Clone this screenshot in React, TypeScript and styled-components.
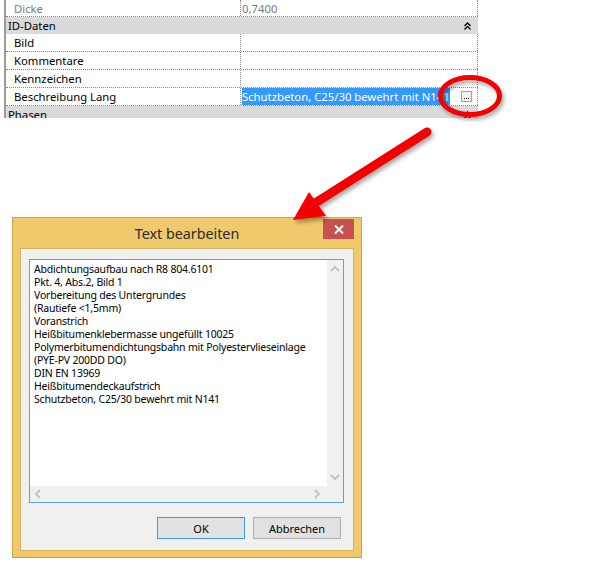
import React from 'react';
import styled, { createGlobalStyle } from 'styled-components';

const GlobalStyle = createGlobalStyle`
  html, body {
    margin: 0;
    padding: 0;
    background: #ffffff;
  }
  body {
    font-family: "Noto Sans", "Liberation Sans", sans-serif;
    font-size: 11.3px;
    color: #000000;
  }
`;

const Page = styled.div`
  position: relative;
  width: 604px;
  height: 566px;
  overflow: hidden;
  background: #ffffff;
`;

/* ---------- property grid ---------- */

const Grid = styled.div`
  margin-left: 4px;
  width: 472px;
  height: 118px;
  overflow: hidden;
  border-left: 2px solid #9a9a9a;
  display: flex;
  flex-direction: column;
`;

const Row = styled.div<{ $h?: number }>`
  display: grid;
  grid-template-columns: 235px 1fr;
  height: ${p => p.$h ?? 18}px;
  box-sizing: border-box;
  border-bottom: 1px dotted #8a8a8a;
  flex: none;
`;

const Label = styled.div<{ $muted?: boolean }>`
  padding-left: 8px;
  display: flex;
  align-items: center;
  border-right: 1px dotted #8a8a8a;
  color: ${p => (p.$muted ? '#7a7a7a' : '#000000')};
  white-space: nowrap;
`;

const Value = styled.div<{ $muted?: boolean }>`
  display: flex;
  align-items: center;
  padding-left: 1px;
  border-right: 1px dotted #8a8a8a;
  color: ${p => (p.$muted ? '#7a7a7a' : '#000000')};
  white-space: nowrap;
  overflow: hidden;
`;

const Selected = styled.span`
  background: #3399ff;
  color: #ffffff;
  width: 208px;
  height: 17px;
  line-height: 17px;
  overflow: hidden;
  white-space: nowrap;
  flex: none;
`;

const EllipsisButton = styled.span`
  margin-left: 11px;
  width: 11px;
  height: 11px;
  box-sizing: border-box;
  border: 1px solid #a0a0a0;
  background: #f2f2f2;
  display: flex;
  align-items: flex-end;
  justify-content: center;
  gap: 1px;
  padding-bottom: 2px;
  flex: none;
`;

const Dot = styled.span`
  width: 1px;
  height: 1px;
  background: #222222;
`;

const Category = styled.div`
  height: 17px;
  flex: none;
  background: #dadada;
  display: flex;
  align-items: center;
  justify-content: space-between;
  padding: 0 7px 0 2px;
  white-space: nowrap;
`;

const Chevron = () => (
  <svg width="7" height="8" viewBox="0 0 7 8">
    <path d="M0.5 4 L3.5 1 L6.5 4 M0.5 7.5 L3.5 4.5 L6.5 7.5" fill="none" stroke="#000" strokeWidth="1.3" />
  </svg>
);

/* ---------- dialog ---------- */

const Dialog = styled.div`
  margin: 99px 0 0 12px;
  width: 350px;
  height: 341px;
  box-sizing: border-box;
  border: 1px solid #c8a44e;
  background: #efc96c;
  display: flex;
  flex-direction: column;
  padding: 0 7px 6px 7px;
`;

const TitleBar = styled.div`
  height: 30px;
  flex: none;
  display: grid;
  grid-template-columns: 1fr auto 1fr;
  align-items: start;
`;

const Title = styled.div`
  grid-column: 2;
  padding-top: 6px;
  font-size: 14.3px;
  color: #2b2b2b;
`;

const CloseButton = styled.div`
  grid-column: 3;
  justify-self: end;
  margin-top: 1px;
  width: 31px;
  height: 20px;
  background: #c75050;
  display: flex;
  align-items: center;
  justify-content: center;
`;

const Client = styled.div`
  flex: 1;
  box-sizing: border-box;
  border: 1px solid #d6b25c;
  background: #f0f0f0;
  padding: 10px 9px 10px 8px;
  display: flex;
  flex-direction: column;
`;

const TextBox = styled.div`
  height: 244px;
  box-sizing: border-box;
  border: 1px solid #5a9ee6;
  display: grid;
  grid-template-columns: 1fr 16px;
  grid-template-rows: 1fr 16px;
  background: #f0f0f0;
`;

const TextArea = styled.div`
  background: #ffffff;
  padding: 3px 4px;
  font-size: 10.5px;
  letter-spacing: -0.2px;
  line-height: 13px;
  color: #000000;
  white-space: pre;
  overflow: hidden;
`;

const ScrollCell = styled.div`
  display: flex;
  flex-direction: column;
  align-items: center;
  justify-content: space-between;
  padding: 5px 0;
`;

const HScroll = styled.div`
  display: flex;
  align-items: center;
  justify-content: space-between;
  padding: 0 6px 0 4px;
`;

const ButtonRow = styled.div`
  margin-top: 14px;
  display: flex;
  justify-content: flex-end;
  gap: 8px;
  padding-right: 3px;
`;

const DialogButton = styled.div<{ $default?: boolean }>`
  width: 88px;
  height: 22px;
  box-sizing: border-box;
  border: 1px solid ${p => (p.$default ? '#3d98e8' : '#adadad')};
  background: #e1e1e1;
  display: flex;
  align-items: center;
  justify-content: center;
  font-size: 11px;
`;

const Overlay = styled.svg`
  position: absolute;
  left: 0;
  top: 0;
  pointer-events: none;
`;

const Arrow = ({ dir }: { dir: 'up' | 'down' | 'left' | 'right' }) => {
  const d = {
    up: 'M1 6 L5 2 L9 6',
    down: 'M1 2 L5 6 L9 2',
    left: 'M6 1 L2 5 L6 9',
    right: 'M2 1 L6 5 L2 9',
  }[dir];
  const vertical = dir === 'up' || dir === 'down';
  return (
    <svg width={vertical ? 10 : 8} height={vertical ? 8 : 10} viewBox={vertical ? '0 0 10 8' : '0 0 8 10'}>
      <path d={d} fill="none" stroke="#c4c4c4" strokeWidth="2" />
    </svg>
  );
};

const lines = [
  'Abdichtungsaufbau nach R8 804.6101',
  'Pkt. 4, Abs.2, Bild 1',
  'Vorbereitung des Untergrundes',
  '(Rautiefe <1,5mm)',
  'Voranstrich',
  'Heißbitumenklebermasse ungefüllt 10025',
  'Polymerbitumendichtungsbahn mit Polyestervlieseinlage',
  '(PYE-PV 200DD DO)',
  'DIN EN 13969',
  'Heißbitumendeckaufstrich',
  'Schutzbeton, C25/30 bewehrt mit N141',
];

export default function App() {
  return (
    <>
      <GlobalStyle />
      <Page>
        <Grid>
          <Row $h={17}>
            <Label $muted>Dicke</Label>
            <Value $muted>0,7400</Value>
          </Row>
          <Category>
            <span>ID-Daten</span>
            <Chevron />
          </Category>
          <Row>
            <Label>Bild</Label>
            <Value />
          </Row>
          <Row>
            <Label>Kommentare</Label>
            <Value />
          </Row>
          <Row>
            <Label>Kennzeichen</Label>
            <Value />
          </Row>
          <Row>
            <Label>Beschreibung Lang</Label>
            <Value>
              <Selected>Schutzbeton, C25/30 bewehrt mit N141</Selected>
              <EllipsisButton>
                <Dot />
                <Dot />
                <Dot />
              </EllipsisButton>
            </Value>
          </Row>
          <Category>
            <span>Phasen</span>
            <Chevron />
          </Category>
        </Grid>

        <Dialog>
          <TitleBar>
            <Title>Text bearbeiten</Title>
            <CloseButton>
              <svg width="10" height="9" viewBox="0 0 10 9">
                <path d="M1 0.5 L9 8.5 M9 0.5 L1 8.5" stroke="#ffffff" strokeWidth="2" />
              </svg>
            </CloseButton>
          </TitleBar>
          <Client>
            <TextBox>
              <TextArea>{lines.join('\n')}</TextArea>
              <ScrollCell>
                <Arrow dir="up" />
                <Arrow dir="down" />
              </ScrollCell>
              <HScroll>
                <Arrow dir="left" />
                <Arrow dir="right" />
              </HScroll>
              <div />
            </TextBox>
            <ButtonRow>
              <DialogButton $default>OK</DialogButton>
              <DialogButton>Abbrechen</DialogButton>
            </ButtonRow>
          </Client>
        </Dialog>

        <Overlay width="604" height="566" viewBox="0 0 604 566">
          <defs>
            <filter id="shadow" x="-20%" y="-20%" width="140%" height="140%">
              <feDropShadow dx="2" dy="3" stdDeviation="2" floodColor="#000" floodOpacity="0.35" />
            </filter>
          </defs>
          <ellipse cx="470" cy="96" rx="29.5" ry="18.5" fill="none" stroke="#f20000" strokeWidth="5" filter="url(#shadow)" />
          <g filter="url(#shadow)">
            <line x1="427" y1="132" x2="312" y2="205" stroke="#f50000" strokeWidth="9" strokeLinecap="round" />
            <polygon points="293,220 309,192 326,216" fill="#f50000" />
          </g>
        </Overlay>
      </Page>
    </>
  );
}
